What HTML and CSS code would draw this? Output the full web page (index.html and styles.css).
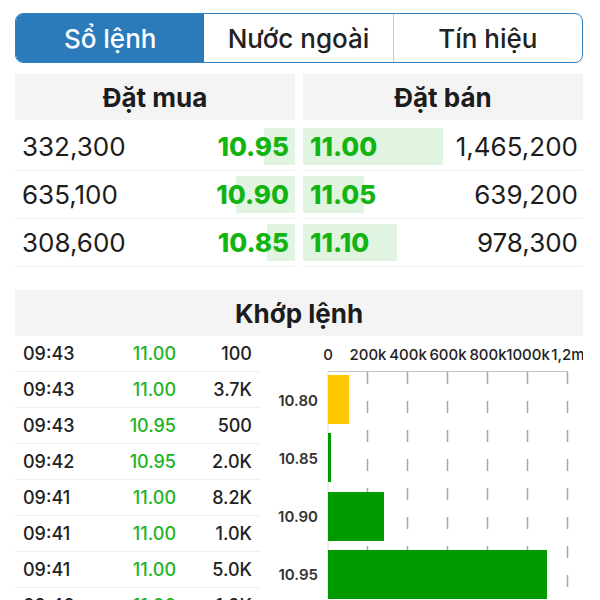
FILE: index.html
```html
<!DOCTYPE html>
<html lang="vi">
<head>
<meta charset="utf-8">
<link rel="stylesheet" href="styles.css">
</head>
<body>
<div class="page">
  <nav class="tabs">
    <div class="tab active">Sổ lệnh</div>
    <div class="tab">Nước ngoài</div>
    <div class="tab">Tín hiệu</div>
  </nav>

  <section class="book">
    <div class="side buy">
      <div class="head">Đặt mua</div>
      <div class="row"><span class="bar" style="width:31px"></span><span class="qty">332,300</span><span class="price">10.95</span></div>
      <div class="row"><span class="bar" style="width:59px"></span><span class="qty">635,100</span><span class="price">10.90</span></div>
      <div class="row"><span class="bar" style="width:28px"></span><span class="qty">308,600</span><span class="price">10.85</span></div>
    </div>
    <div class="side sell">
      <div class="head">Đặt bán</div>
      <div class="row"><span class="bar" style="width:140px"></span><span class="price">11.00</span><span class="qty">1,465,200</span></div>
      <div class="row"><span class="bar" style="width:61px"></span><span class="price">11.05</span><span class="qty">639,200</span></div>
      <div class="row"><span class="bar" style="width:94px"></span><span class="price">11.10</span><span class="qty">978,300</span></div>
    </div>
  </section>

  <section class="match">
    <div class="head">Khớp lệnh</div>
    <div class="match-body">
      <div class="trades">
        <div class="trade"><span>09:43</span><span class="tp">11.00</span><span class="tv">100</span></div>
        <div class="trade"><span>09:43</span><span class="tp">11.00</span><span class="tv">3.7K</span></div>
        <div class="trade"><span>09:43</span><span class="tp">10.95</span><span class="tv">500</span></div>
        <div class="trade"><span>09:42</span><span class="tp">10.95</span><span class="tv">2.0K</span></div>
        <div class="trade"><span>09:41</span><span class="tp">11.00</span><span class="tv">8.2K</span></div>
        <div class="trade"><span>09:41</span><span class="tp">11.00</span><span class="tv">1.0K</span></div>
        <div class="trade"><span>09:41</span><span class="tp">11.00</span><span class="tv">5.0K</span></div>
        <div class="trade"><span>09:40</span><span class="tp">11.00</span><span class="tv">1.0K</span></div>
      </div>
      <svg class="chart" width="323" height="290" viewBox="0 0 323 290">
        <g class="xlab">
          <text x="68" y="24">0</text>
          <text x="108" y="24">200k</text>
          <text x="148" y="24">400k</text>
          <text x="188" y="24">600k</text>
          <text x="228" y="24">800k</text>
          <text x="268" y="24">1000k</text>
          <text x="308" y="24">1,2m</text>
        </g>
        <line x1="68" y1="35.5" x2="308" y2="35.5" stroke="#c4c4c4" stroke-width="1"/>
        <line x1="68" y1="35" x2="68" y2="290" stroke="#dcdcdc" stroke-width="1"/>
        <g stroke="#a8a8a8" stroke-width="1.5" stroke-dasharray="12 17">
          <line x1="107.5" y1="36" x2="107.5" y2="290"/>
          <line x1="147.5" y1="36" x2="147.5" y2="290"/>
          <line x1="187.5" y1="36" x2="187.5" y2="290"/>
          <line x1="227.5" y1="36" x2="227.5" y2="290"/>
          <line x1="267.5" y1="36" x2="267.5" y2="290"/>
          <line x1="307.5" y1="36" x2="307.5" y2="290"/>
        </g>
        <rect x="68" y="39" width="21" height="49" fill="#ffc800"/>
        <rect x="68" y="97" width="3" height="49" fill="#009a00"/>
        <rect x="68" y="156" width="56" height="49" fill="#009a00"/>
        <rect x="68" y="214" width="219" height="49" fill="#009a00"/>
        <g class="ylab">
          <text x="58" y="70">10.80</text>
          <text x="58" y="128">10.85</text>
          <text x="58" y="186">10.90</text>
          <text x="58" y="244">10.95</text>
        </g>
      </svg>
    </div>
  </section>
</div>
</body>
</html>
```
FILE: styles.css
```css
* { box-sizing: border-box; }
html, body { margin: 0; padding: 0; background: #fff; }
body {
  font-family: Inter, "Noto Sans", "DejaVu Sans", sans-serif;
  color: #1c1c1c;
  overflow: hidden;
  height: 600px;
}
.page { padding: 13px 17px 0 15px; }

.tabs {
  display: flex;
  height: 50px;
  border: 1.5px solid #2f7fbf;
  border-radius: 8px;
  overflow: hidden;
}
.tab {
  flex: 1;
  display: flex;
  align-items: center;
  justify-content: center;
  font-size: 26px;
  font-weight: 500;
  color: #222;
  border-left: 1px solid #c9c9c9;
}
.tab:first-child { border-left: none; }
.tab.active { background: #2b7bbb; color: #fff; }
.tab.active + .tab { border-left: none; }

.book {
  margin-top: 11px;
  display: grid;
  grid-template-columns: 1fr 1fr;
  column-gap: 8px;
}
.head {
  height: 46px;
  background: #f4f4f4;
  display: flex;
  align-items: center;
  justify-content: center;
  font-size: 26px;
  font-weight: 700;
  color: #1c1c1c;
}
.side .head { margin-bottom: 3px; }
.row {
  position: relative;
  height: 48px;
  border-bottom: 1px solid #efefef;
  display: flex;
  align-items: center;
  justify-content: space-between;
  font-size: 26px;
}
.buy .row { padding: 0 6px 0 7px; }
.sell .row { padding: 0 5px 0 7px; }
.bar {
  position: absolute;
  top: 5px;
  bottom: 5px;
  background: #e1f4e1;
}
.buy .bar { right: 0; }
.sell .bar { left: 0; }
.row .qty, .row .price { position: relative; }
.price { color: #12b412; font-weight: 800; }
.qty { color: #1c1c1c; }

.match { margin-top: 23px; }
.match-body {
  display: grid;
  grid-template-columns: 245px 1fr;
}
.trade {
  height: 36px;
  border-bottom: 1px solid #efefef;
  display: grid;
  grid-template-columns: 90px 63px 76px;
  align-items: center;
  padding-left: 8px;
  font-size: 18px;
  font-weight: 450;
  color: #222;
}
.tp { text-align: right; color: #22b422; }
.tv { text-align: right; }

.chart { display: block; }
.xlab text {
  font-family: Inter, "Noto Sans", sans-serif;
  font-size: 15px;
  font-weight: 500;
  fill: #222;
  text-anchor: middle;
}
.ylab text {
  font-family: Inter, "Noto Sans", sans-serif;
  font-size: 15px;
  font-weight: 600;
  fill: #333;
  text-anchor: end;
}
```
